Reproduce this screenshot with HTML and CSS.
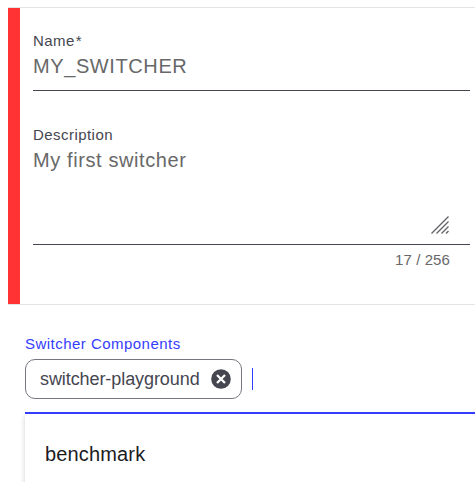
FILE: index.html
```html
<!DOCTYPE html>
<html lang="en">
<head>
<meta charset="utf-8">
<title>Switcher</title>
<link rel="stylesheet" href="styles.css">
</head>
<body>
<section class="card">
  <div class="field name">
    <label class="label">Name<span class="star">*</span></label>
    <div class="value">MY_SWITCHER</div>
  </div>
  <div class="field description">
    <label class="label">Description</label>
    <div class="value">My first switcher</div>
    <svg class="grip" width="20" height="20" viewBox="0 0 20 20"><path d="M1.5 18.5 18.5 1.5M6.5 18.5l12-12M11.5 18.5l7-7M16 18.5l2.5-2.5"/></svg>
  </div>
  <div class="hint">17 / 256</div>
</section>
<section class="components">
  <div class="caption">Switcher Components</div>
  <div class="chips">
    <div class="chip"><span>switcher-playground</span>
      <svg width="20" height="20" viewBox="0 0 20 20"><circle cx="10" cy="10" r="9.8"/><path d="m6 6 8 8M14 6l-8 8"/></svg>
    </div>
    <span class="caret"></span>
  </div>
  <div class="panel"><div class="option">benchmark</div></div>
</section>
</body>
</html>
```
FILE: styles.css
```css
* { box-sizing: border-box; }
body {
  margin: 0;
  height: 482px;
  overflow: hidden;
  background: #fff;
  font-family: "Liberation Sans", Arial, sans-serif;
}
.card {
  margin: 7px 0 0 8px;
  height: 298px;
  padding: 23px 5px 0 24px;
  border: 1px solid #e4e4e5;
  border-width: 1px 0;
  background: linear-gradient(#ff3333, #ff3333) 0 0 / 12px 100% no-repeat;
}
.field {
  position: relative;
  margin-left: 1px;
  border-bottom: 1px solid #45464f;
}
.name { height: 60px; }
.description { height: 120px; margin-top: 34px; }
.label {
  display: block;
  height: 20px;
  font-size: 15px;
  line-height: 20px;
  letter-spacing: .45px;
  color: #45464f;
}
.star { margin-left: 1px; }
.value {
  font-size: 20px;
  line-height: 30px;
  letter-spacing: .6px;
  color: #686868;
}
.grip {
  position: absolute;
  right: 20px;
  bottom: 9px;
  fill: none;
  stroke: #66666a;
  stroke-width: 1.4;
}
.hint {
  padding: 5px 20px 0 0;
  text-align: right;
  font-size: 15px;
  line-height: 20px;
  letter-spacing: .1px;
  color: #686868;
}
.components { margin-left: 25px; }
.caption {
  padding-top: 29px;
  height: 54px;
  font-size: 15px;
  line-height: 20px;
  letter-spacing: .47px;
  color: #343dff;
}
.chips { display: flex; height: 53px; }
.chip {
  display: flex;
  align-items: center;
  justify-content: space-between;
  width: 217px;
  height: 40px;
  padding: 0 10px 0 14px;
  border: 1px solid #767680;
  border-radius: 10px;
  font-size: 18px;
  letter-spacing: -.08px;
  color: #45464f;
}
.chip circle { fill: #45464f; }
.chip path { stroke: #fff; stroke-width: 2.3; }
.caret { width: 1px; height: 22px; margin: 9px 0 0 10px; background: #343dff; }
.panel {
  height: 90px;
  border-top: 2px solid #343dff;
  box-shadow: 0 4px 5px rgba(0, 0, 0, .2);
}
.option {
  padding: 25px 20px;
  font-size: 20px;
  line-height: 30px;
  letter-spacing: .15px;
  color: #1b1b1f;
}
```
